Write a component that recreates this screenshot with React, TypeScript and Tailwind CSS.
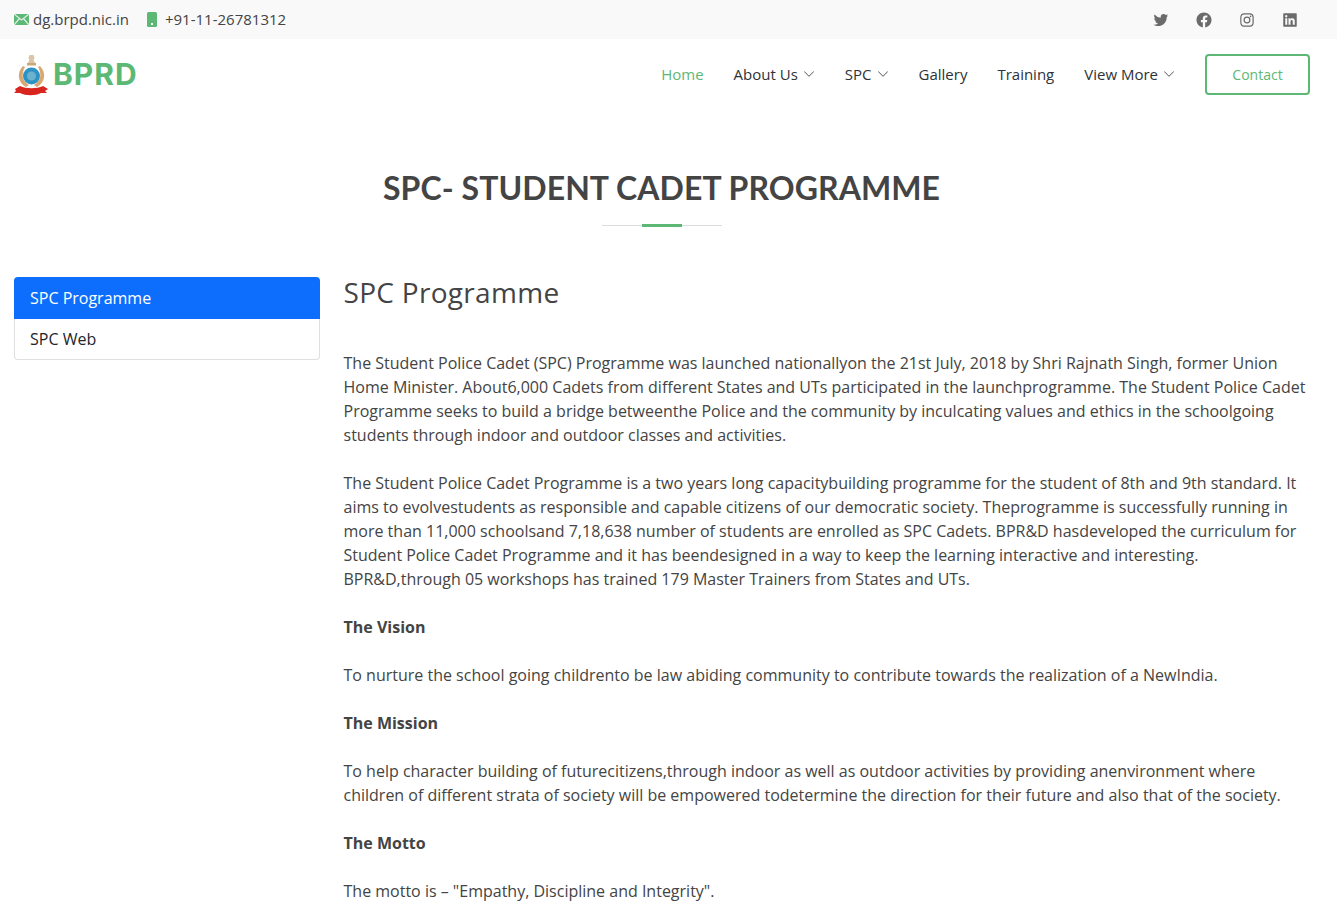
import React from 'react';
import { BsChevronDown } from 'react-icons/bs';
import { BiLogoTwitter, BiLogoFacebookCircle, BiLogoInstagram, BiLogoLinkedinSquare } from 'react-icons/bi';

const navItems = [
  { label: 'About Us', caret: true },
  { label: 'SPC', caret: true },
  { label: 'Gallery', caret: false },
  { label: 'Training', caret: false },
  { label: 'View More', caret: true },
];

function Logo() {
  return (
    <svg width="36" height="42" viewBox="0 0 36 42">
      {/* lion capital */}
      <path d="M15.500 1h4l1 3-1 2 1.500 3h-7l1.500-3-1-2z" fill="#dcc4a6" />
      <path d="M13 9h9v2.500h-9z" fill="#c9a878" />
      {/* wreath */}
      <path d="M9 12c-6 6-6 16 3 21l3-2c-7-4-8-11-4-18z" fill="#d9a871" />
      <path d="M26 12c6 6 6 16-3 21l-3-2c7-4 8-11 4-18z" fill="#d9a871" />
      <circle cx="17.500" cy="22" r="8.500" fill="#2c93c6" />
      <circle cx="17.500" cy="22" r="4.500" fill="#6fb0cc" />
      {/* ribbon */}
      <path d="M1 35l5-3c6 3 17 3 23 0l5 3-3 2 2 2-6 0c-6 3-15 3-21 0l-6 0 2-2z" fill="#d8261f" />
    </svg>
  );
}

export default function App() {
  return (
    <div className="h-[922px] overflow-hidden bg-white text-[16px] leading-[24px] text-[#444444] font-['Open_Sans',sans-serif]">
      {/* Top bar */}
      <div className="h-[39px] bg-[#f9f9f9] flex items-center justify-between pl-[14px] pr-[38px] text-[15px]">
        <div className="flex items-center -mt-px">
          <svg width="15" height="11" viewBox="0 0 15 11" className="mr-[4px]">
            <rect width="15" height="11" fill="#5cb874" />
            <path d="M0 0l7.500 6L15 0M0 11l5.500-6.500M15 11L9.500 4.500" stroke="#dff1e4" strokeWidth="1.200" fill="none" />
          </svg>
          <span>dg.brpd.nic.in</span>
          <svg width="10" height="15" viewBox="0 0 10 15" className="ml-[18px] mr-[8px]">
            <rect width="10" height="15" rx="1.500" fill="#5cb874" />
            <rect x="4" y="11" width="2" height="2" fill="#fff" />
          </svg>
          <span>+91-11-26781312</span>
        </div>
        <div className="flex items-center gap-[25px] text-[#6b6b6b] text-[18px]">
          <BiLogoTwitter />
          <BiLogoFacebookCircle />
          <BiLogoInstagram />
          <BiLogoLinkedinSquare />
        </div>
      </div>

      {/* Header */}
      <header className="h-[71px] flex items-center justify-between pl-[14px] pr-[27px]">
        <div className="flex items-center gap-[3px]">
          <Logo />
          <span className="-mt-[2px] text-[30px] font-bold text-[#5cb874] tracking-[1px] font-['Inter',sans-serif]">BPRD</span>
        </div>
        <nav className="flex items-center text-[15px] text-[#2c3338]">
          <a className="-mt-[2px] text-[#5cb874] mr-[30px]">Home</a>
          {navItems.map((item) => (
            <a key={item.label} className="-mt-[2px] flex items-center mr-[30px]">
              {item.label}
              {item.caret && <BsChevronDown className="w-[12px] h-[12px] ml-[5px] text-[#555]" />}
            </a>
          ))}
          <a className="w-[105px] h-[41px] flex items-center justify-center rounded-[4px] border-2 border-[#5cb874] text-[#5cb874] text-[14px]">
            Contact
          </a>
        </nav>
      </header>

      {/* Section title */}
      <div className="pt-[59px] flex flex-col items-center pr-[14px]">
        <h1 className="text-[32px] leading-[38px] font-bold tracking-[0.07px] text-[#444444] font-['Lato',sans-serif]">
          SPC- STUDENT CADET PROGRAMME
        </h1>
        <div className="relative mt-[18px] w-[120px] h-px bg-[#dddddd]">
          <div className="absolute left-[40px] -top-px w-[40px] h-[3px] bg-[#5cb874]" />
        </div>
      </div>

      {/* Body */}
      <div className="flex pl-[14px] pr-[24px] pt-[51px] gap-[23.5px]">
        <aside className="w-[306px] shrink-0">
          <div className="h-[42px] rounded-t-[4px] bg-[#0d6efd] text-white flex items-center px-[16px]">SPC Programme</div>
          <div className="h-[41px] rounded-b-[4px] border border-t-0 border-[#dfdfdf] flex items-center px-[15px] text-[#212529]">SPC Web</div>
        </aside>
        <main className="flex-1 min-w-0">
          <h2 className="-mt-px text-[28px] leading-[33px] mb-[42px] tracking-[0.3px] text-[#444444]">SPC Programme</h2>
          <p className="mb-[24px]">
            The Student Police Cadet (SPC) Programme was launched nationallyon the 21st July, 2018 by Shri Rajnath Singh, former Union Home Minister. About6,000 Cadets from different States and UTs participated in the launchprogramme. The Student Police Cadet Programme seeks to build a bridge betweenthe Police and the community by inculcating values and ethics in the schoolgoing students through indoor and outdoor classes and activities.
          </p>
          <p className="mb-[24px]">
            The Student Police Cadet Programme is a two years long capacitybuilding programme for the student of 8th and 9th standard. It aims to evolvestudents as responsible and capable citizens of our democratic society. Theprogramme is successfully running in more than 11,000 schoolsand 7,18,638 number of students are enrolled as SPC Cadets. BPR&amp;D hasdeveloped the curriculum for Student Police Cadet Programme and it has beendesigned in a way to keep the learning interactive and interesting.
            <br />
            BPR&amp;D,through 05 workshops has trained 179 Master Trainers from States and UTs.
          </p>
          <p className="mb-[24px] font-bold">The Vision</p>
          <p className="mb-[24px]">To nurture the school going childrento be law abiding community to contribute towards the realization of a NewIndia.</p>
          <p className="mb-[24px] font-bold">The Mission</p>
          <p className="mb-[24px]">
            To help character building of futurecitizens,through indoor as well as outdoor activities by providing anenvironment where children of different strata of society will be empowered todetermine the direction for their future and also that of the society.
          </p>
          <p className="mb-[24px] font-bold">The Motto</p>
          <p>The motto is – "Empathy, Discipline and Integrity".</p>
        </main>
      </div>
    </div>
  );
}
